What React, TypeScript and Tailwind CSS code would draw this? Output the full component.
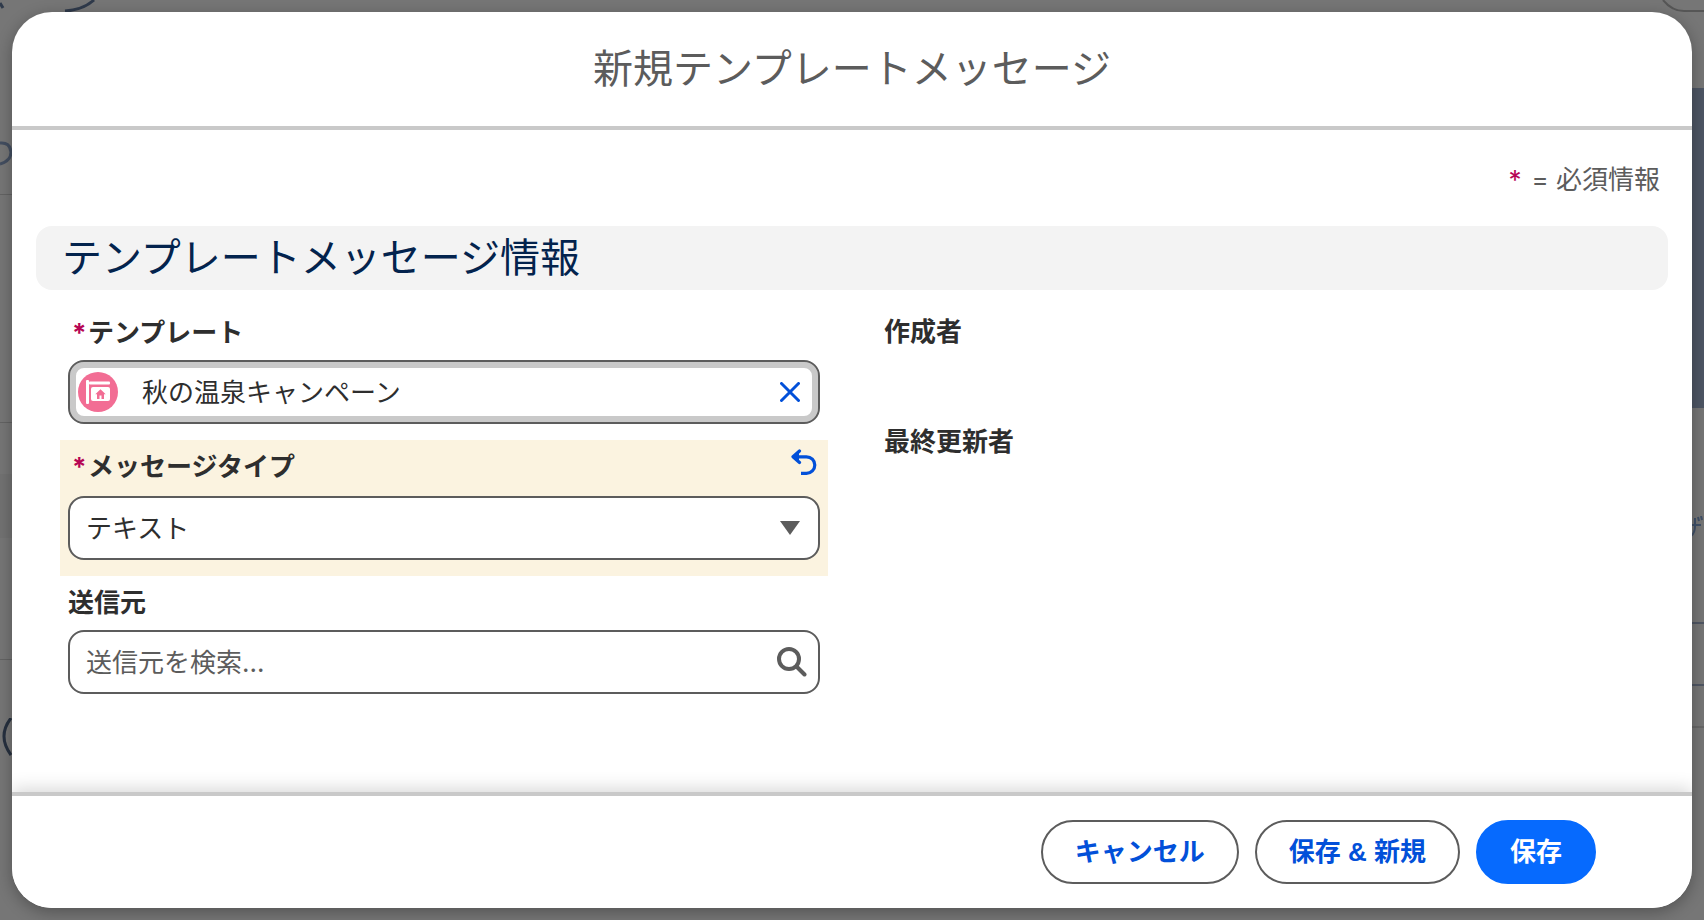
import React, { useState } from "react";

interface FieldLabelProps {
  htmlFor: string;
  required?: boolean;
  children: React.ReactNode;
}

const FieldLabel: React.FC<FieldLabelProps> = ({ htmlFor, required, children }) => (
  <label htmlFor={htmlFor} className="flex h-10 items-center text-[26px] font-bold">
    {required && <span className="w-5 pl-1 text-[#b60554]">*</span>}
    {children}
  </label>
);

const TemplateIcon = () => (
  <svg viewBox="0 0 40 40" className="h-10 w-10 shrink-0" aria-hidden="true">
    <circle cx="20" cy="20" r="20" fill="#f26d94" />
    <rect x="8" y="8" width="3" height="24" rx="1" fill="#fff" />
    <rect x="11" y="9.500" width="21" height="3" rx="1" fill="#fff" />
    <rect x="13" y="15" width="19" height="14" rx="2" fill="#fff" />
    <path d="M22.500 17.300l5.200 4.900h-1.700v4.800h-2.500v-3.500h-2V27H19v-4.800h-1.700z" fill="#f26d94" />
  </svg>
);

const CloseIcon = () => (
  <svg viewBox="0 0 20 20" className="h-5 w-5" aria-hidden="true">
    <path d="M1.500 1.500l17 17M18.500 1.500l-17 17" stroke="#0250d9" strokeWidth="3" strokeLinecap="round" />
  </svg>
);

const UndoIcon = () => (
  <svg viewBox="0 0 26 26" className="h-[26px] w-[26px]" fill="none" stroke="#0250d9" strokeWidth="3.200" aria-hidden="true">
    <path d="M8.500 2L2 7.800l6.500 5.700" strokeLinecap="round" strokeLinejoin="round" />
    <path d="M2.500 7.800H15.500a8.300 8.300 0 0 1 0 16.600H10" />
    <path d="M1 7.800l7-5v10z" fill="#0250d9" stroke="none" />
  </svg>
);

const SearchIcon = () => (
  <svg viewBox="0 0 30 30" className="h-[30px] w-[30px] shrink-0" fill="none" stroke="#5c5c5c" aria-hidden="true">
    <circle cx="12" cy="12" r="10" strokeWidth="4" />
    <path d="M19.500 19.500l8 8" strokeWidth="4" strokeLinecap="round" />
  </svg>
);

// The edges of the record page that stay visible around the dialog
const PageBehind = () => (
  <div className="absolute inset-0 flex justify-between overflow-hidden bg-[#767676]" aria-hidden="true">
    <div className="flex w-24 flex-col">
      <svg viewBox="0 0 96 12" className="h-3 w-24" fill="none" stroke="#2f3a4b" strokeWidth="3">
        <path d="M0 3l3 5M65 11Q83 10 94 0" />
      </svg>
      <svg viewBox="0 0 12 26" className="mt-32 h-[26px] w-3" fill="none" stroke="#434e60" strokeWidth="3">
        <path d="M0 3Q10 2 11 12Q11 21 0 24" />
      </svg>
      <div className="mt-7 h-px bg-[#636363]" />
      <div className="mt-[227px] h-px bg-[#636363]" />
      <div className="mt-[51px] h-16 bg-[#727272]" />
      <div className="mt-[121px] h-px bg-[#636363]" />
      <svg viewBox="0 0 12 38" className="mt-[58px] h-[38px] w-3" fill="none" stroke="#26303f" strokeWidth="3">
        <path d="M11 0Q-3 18 11 37" />
      </svg>
    </div>
    <div className="flex w-11 flex-col">
      <svg viewBox="0 0 44 12" className="h-3 w-11" fill="none" stroke="#565656" strokeWidth="2">
        <path d="M3 0Q12 11 24 11H44" />
      </svg>
      <div className="mt-[76px] h-80 bg-[#4d5564]" />
      <svg viewBox="0 0 44 22" className="mt-[108px] h-[22px] w-11" fill="none" stroke="#3f5068" strokeWidth="2">
        <path d="M30 9h11M35 2v8q0 7-4 10M38 1l1 4M41 0l1 4" />
      </svg>
      <div className="mt-[84px] h-0.5 bg-[#4f5663]" />
      <div className="mt-[60px] h-0.5 bg-[#4f5663]" />
      <div className="mt-10 h-0.5 bg-[#676767]" />
    </div>
  </div>
);

const App: React.FC = () => {
  const [template, setTemplate] = useState("秋の温泉キャンペーン");
  const [messageType, setMessageType] = useState("テキスト");
  const [sender, setSender] = useState("");

  return (
    <div className="relative flex min-h-screen p-3 font-['Inter','Noto_Sans_CJK_JP',sans-serif] text-[#2e2e2e]">
      <PageBehind />
      <div
        role="dialog"
        aria-labelledby="dialog-title"
        className="relative flex flex-1 flex-col overflow-hidden rounded-[40px] bg-white shadow-[0_4px_16px_rgba(0,0,0,0.3)]"
      >
        <header className="flex h-[118px] items-center justify-center border-b-4 border-[#c9c9c9]">
          <h1 id="dialog-title" className="text-[40px] leading-[60px] text-[#5c5c5c]">
            新規テンプレートメッセージ
          </h1>
        </header>

        <main className="flex-1 px-6">
          <p className="flex justify-end pt-[30px] pr-2 text-[26px] leading-10 text-[#5c5c5c]">
            <span className="mr-2.5 text-[#b60554]">*</span>= 必須情報
          </p>

          <h2 className="mt-[26px] flex h-16 items-center rounded-2xl bg-[#f3f3f3] px-[26px] text-[40px] leading-none text-[#03234d]">
            テンプレートメッセージ情報
          </h2>

          <form id="template-form" className="grid grid-cols-2 pt-3.5" onSubmit={(e) => e.preventDefault()}>
            <div className="px-6">
              <div className="px-2 pt-2 pb-4">
                <FieldLabel htmlFor="template" required>
                  テンプレート
                </FieldLabel>
                <div className="mt-2 flex h-16 items-center rounded-2xl border-2 border-[#5c5c5c] bg-white pr-[18px] pl-2 shadow-[inset_0_0_0_6px_#c9c9c9]">
                  <TemplateIcon />
                  <input
                    id="template"
                    className="ml-6 min-w-0 flex-1 bg-transparent text-[26px] outline-none"
                    value={template}
                    onChange={(e) => setTemplate(e.target.value)}
                  />
                  <button type="button" aria-label="選択をクリア" onClick={() => setTemplate("")}>
                    <CloseIcon />
                  </button>
                </div>
              </div>

              <div className="bg-[#fbf3e0] px-2 pt-1.5 pb-4">
                <div className="flex justify-between">
                  <FieldLabel htmlFor="message-type" required>
                    メッセージタイプ
                  </FieldLabel>
                  <button type="button" className="mr-[3px] pb-2" aria-label="元に戻す" onClick={() => setMessageType("テキスト")}>
                    <UndoIcon />
                  </button>
                </div>
                <div className="relative mt-2.5">
                  <select
                    id="message-type"
                    className="block h-16 w-full appearance-none rounded-2xl border-2 border-[#5c5c5c] bg-white px-4 text-[26px] outline-none"
                    value={messageType}
                    onChange={(e) => setMessageType(e.target.value)}
                  >
                    <option>テキスト</option>
                  </select>
                  <svg viewBox="0 0 20 14" className="pointer-events-none absolute top-[25px] right-5 h-3.5 w-5" aria-hidden="true">
                    <path d="M0 0h20L10 14z" fill="#5c5c5c" />
                  </svg>
                </div>
              </div>

              <div className="px-2 pt-1.5 pb-4">
                <FieldLabel htmlFor="sender">送信元</FieldLabel>
                <div className="mt-2 flex h-16 items-center rounded-2xl border-2 border-[#5c5c5c] bg-white pr-[11px] pl-4">
                  <input
                    id="sender"
                    className="min-w-0 flex-1 bg-transparent text-[26px] outline-none placeholder:text-[#5c5c5c]"
                    placeholder="送信元を検索..."
                    value={sender}
                    onChange={(e) => setSender(e.target.value)}
                  />
                  <SearchIcon />
                </div>
              </div>
            </div>

            <dl className="px-8 pt-2 text-[26px] leading-10 font-bold">
              <dt>作成者</dt>
              <dd className="h-[70px]" />
              <dt>最終更新者</dt>
              <dd />
            </dl>
          </form>
        </main>

        <footer className="relative flex h-[116px] items-center justify-end gap-4 border-t-4 border-[#c9c9c9] bg-white pr-24 font-['Liberation_Sans','Noto_Sans_CJK_JP',sans-serif] text-[26px] font-bold text-[#0250d9] shadow-[0_-4px_16px_rgba(0,0,0,0.15)]">
          <button type="button" className="h-16 rounded-full border-2 border-[#5c5c5c] px-8">
            キャンセル
          </button>
          <button type="button" className="h-16 rounded-full border-2 border-[#5c5c5c] px-8">
            保存 &amp; 新規
          </button>
          <button type="submit" form="template-form" className="h-16 rounded-full border-2 border-[#066afe] bg-[#066afe] px-8 text-white">
            保存
          </button>
        </footer>
      </div>
    </div>
  );
};

export default App;
